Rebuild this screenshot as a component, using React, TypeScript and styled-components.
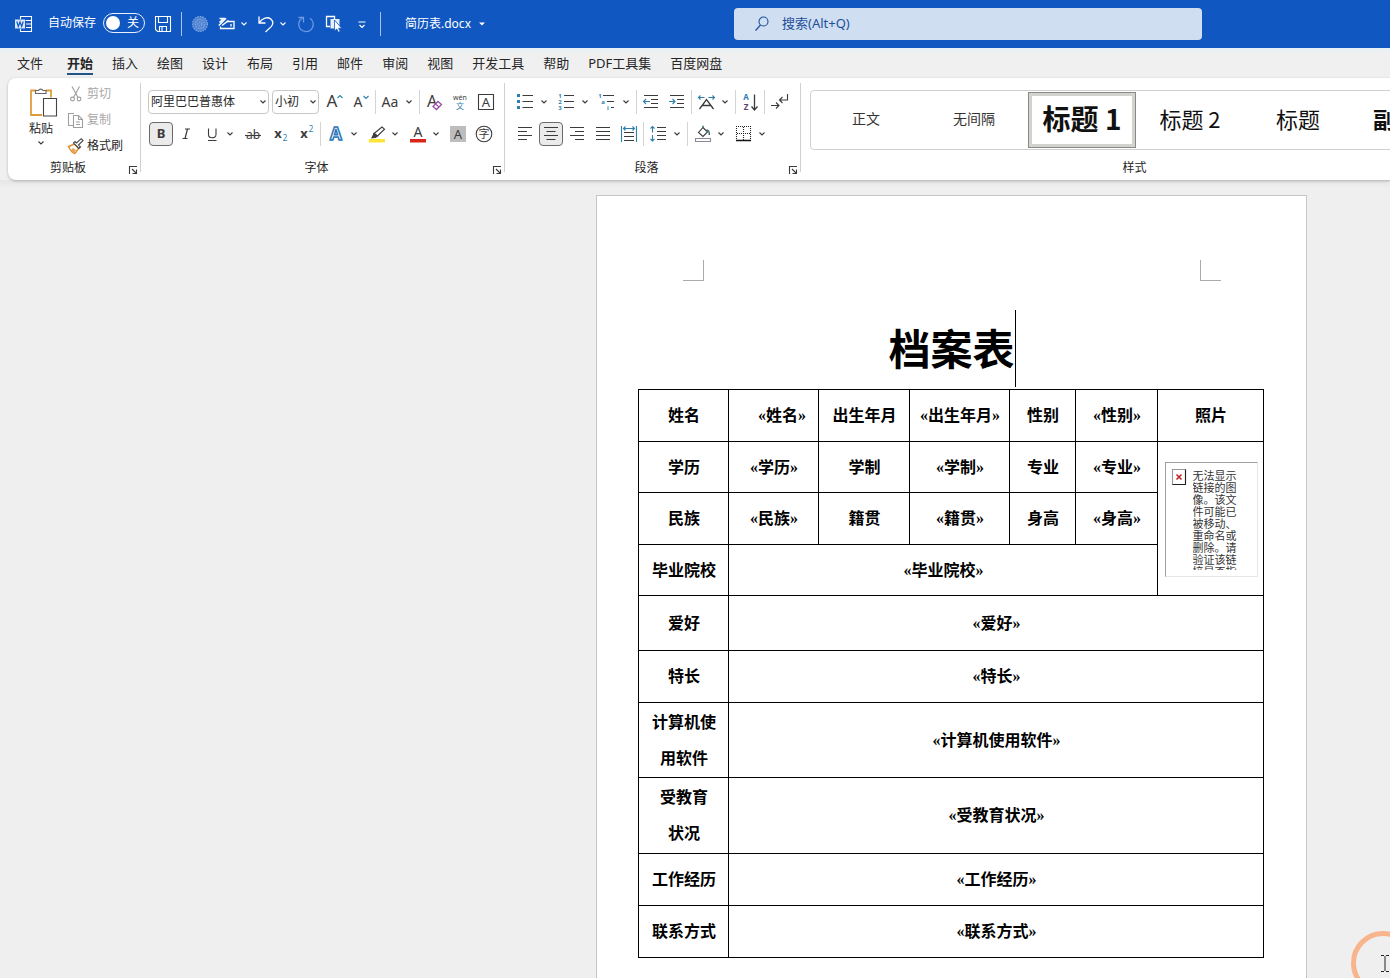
import React from "react";
import styled, { createGlobalStyle } from "styled-components";

const UI_FONT = '"Noto Sans", "Noto Sans CJK SC", sans-serif';
const INK = "#3b3b3b";
const BLUE = "#2f7fae";

const GlobalStyle = createGlobalStyle`
  * { box-sizing: border-box; }
  body {
    margin: 0;
    background: #f0f0f0;
    font-family: ${UI_FONT};
    font-size: 12px;
    line-height: 16px;
    color: #262626;
  }
  button, input, select {
    font-family: inherit;
    color: inherit;
  }
`;

const Shell = styled.div`
  display: flex;
  flex-direction: column;
  height: 100vh;
  overflow: hidden;
`;

/* ---------- title bar ---------- */

const TitleBar = styled.header`
  display: flex;
  flex: none;
  height: 48px;
  align-items: center;
  background: #1057c1;
  color: #fff;
`;

const TitleLeft = styled.div`
  display: flex;
  flex: 0 0 734px;
  align-items: center;
  padding-left: 12px;
`;

const AutoSave = styled.label`
  display: flex;
  align-items: center;
  gap: 7px;
  margin: 0 6px 2px 12px;
`;

const SwitchTrack = styled.span`
  position: relative;
  display: flex;
  width: 42px;
  height: 20px;
  align-items: center;
  justify-content: flex-end;
  padding-right: 5px;
  border: 1px solid #e8f0ff;
  border-radius: 10px;

  &::before {
    content: "";
    position: absolute;
    top: 2px;
    left: 2px;
    width: 14px;
    height: 14px;
    border-radius: 50%;
    background: #fff;
  }
`;

const SwitchInput = styled.input`
  position: absolute;
  inset: 0;
  margin: 0;
  opacity: 0;
`;

const QuickAccess = styled.div`
  display: flex;
  align-items: center;
  gap: 4px;
`;

const BarButton = styled.button<{ $w?: number }>`
  display: flex;
  flex: none;
  width: ${(p) => p.$w ?? 24}px;
  height: 24px;
  align-items: center;
  justify-content: center;
  padding: 0;
  border: 0;
  background: none;
`;

const BarSplit = styled.div`
  display: flex;
`;

const BarDivider = styled.span`
  width: 1px;
  height: 24px;
  margin: 0 2px;
  background: #a9c3ea;
`;

const FileName = styled.button`
  display: flex;
  align-items: center;
  gap: 8px;
  margin-left: 22px;
  padding: 0;
  border: 0;
  background: none;
  font-size: 12px;
  line-height: 16px;
`;

const SearchBox = styled.label`
  display: flex;
  flex: 0 1 468px;
  height: 32px;
  align-items: center;
  gap: 12px;
  padding: 0 20px 2px;
  border-radius: 4px;
  background: #cfdef1;
  color: #1f4f9a;
`;

const SearchInput = styled.input`
  flex: 1;
  min-width: 0;
  padding: 0;
  border: 0;
  outline: 0;
  background: none;
  font-size: 13px;
  line-height: 20px;

  &::placeholder {
    color: #1f4f9a;
    opacity: 1;
  }
`;

/* ---------- tabs ---------- */

const Tabs = styled.nav`
  display: flex;
  flex: none;
  height: 30px;
  gap: 19px;
  padding-left: 17px;
  background: linear-gradient(#e6f1f7, #f0f0f0 6px);
`;

const Tab = styled.a<{ $active?: boolean }>`
  height: 27px;
  padding-top: 5px;
  border-bottom: 2px solid ${(p) => (p.$active ? "#1d5687" : "transparent")};
  color: #262626;
  font-size: 13px;
  font-weight: ${(p) => (p.$active ? 700 : 400)};
  line-height: 20px;
  text-decoration: none;
  white-space: nowrap;

  &:first-child {
    margin-right: 5px;
  }
`;

/* ---------- ribbon ---------- */

const Ribbon = styled.div`
  display: flex;
  flex: none;
  height: 102px;
  margin-left: 8px;
  padding: 5px 0 2px;
  border-radius: 8px 0 0 8px;
  background: #fff;
  box-shadow: 0 1px 3px rgba(0, 0, 0, 0.25);
  z-index: 1;
`;

const Group = styled.section<{ $w: number }>`
  position: relative;
  display: flex;
  flex: none;
  width: ${(p) => p.$w}px;
  flex-direction: column;
  justify-content: space-between;

  &::after {
    content: "";
    position: absolute;
    top: 0;
    right: 0;
    bottom: 6px;
    width: 1px;
    background: #d0d0d0;
  }
`;

const GroupFooter = styled.div`
  display: flex;
  flex: none;
  align-items: center;
  justify-content: center;
  height: 20px;
  padding-right: 3px;
`;

const GroupLabel = styled.span`
  flex: 1;
  font-size: 12px;
  line-height: 20px;
  text-align: center;
`;

const Launcher = styled.button`
  display: flex;
  width: 10px;
  height: 14px;
  align-items: flex-end;
  padding: 0;
  border: 0;
  background: none;
`;

const ClipboardBody = styled.div`
  display: flex;
  height: 75px;
  gap: 11px;
  padding-left: 18px;
`;

const PasteButton = styled.button`
  display: flex;
  width: 30px;
  flex-direction: column;
  align-items: center;
  padding: 3px 0 0;
  border: 0;
  background: none;
  font-size: 12px;
  line-height: 22px;
  white-space: nowrap;
`;

const ClipboardList = styled.div`
  display: flex;
  flex-direction: column;
`;

const ClipboardItem = styled.button<{ $off?: boolean }>`
  display: flex;
  flex: none;
  height: 26px;
  align-items: center;
  gap: 2px;
  padding: 0 0 4px;
  border: 0;
  background: none;
  color: ${(p) => (p.$off ? "#a8a8a8" : "#262626")};
  font-size: 12px;
  line-height: 18px;
  white-space: nowrap;
`;

const ToolRows = styled.div`
  display: flex;
  flex-direction: column;
  gap: 8px;
  padding: 7px 0 0 7px;
`;

const ToolRow = styled.div`
  display: flex;
  height: 24px;
  align-items: center;
`;

const Tool = styled.button<{ $w?: number; $on?: boolean }>`
  display: flex;
  flex: none;
  width: ${(p) => p.$w ?? 26}px;
  height: 24px;
  align-items: center;
  justify-content: center;
  padding: 0;
  border: 0;
  background: none;

  & > span {
    display: flex;
    width: 24px;
    height: 24px;
    align-items: center;
    justify-content: center;
    border: 1px solid ${(p) => (p.$on ? "#6a6a6a" : "transparent")};
    border-radius: 4px;
    background: ${(p) => (p.$on ? "#ebebeb" : "none")};
  }
`;

const SplitTool = styled.button`
  display: flex;
  flex: none;
  width: 41px;
  height: 24px;
  align-items: center;
  gap: 5px;
  padding: 0 5px;
  border: 0;
  background: none;
`;

const ToolDivider = styled.span`
  flex: none;
  width: 1px;
  height: 24px;
  margin: 0 1px;
  background: #d4d4d4;
`;

const Combo = styled.span<{ $w: number }>`
  position: relative;
  flex: none;
  width: ${(p) => p.$w}px;
  height: 24px;
  margin-right: 3px;

  & > svg {
    position: absolute;
    top: 9px;
    right: 2px;
    pointer-events: none;
  }
`;

const ComboSelect = styled.select`
  width: 100%;
  height: 24px;
  padding: 0 0 2px 2px;
  border: 1px solid #c8c8c8;
  border-radius: 4px;
  background: #fff;
  appearance: none;
  font-size: 12px;
`;

const StylesBody = styled.div`
  padding: 7px 8px 0 9px;
`;

const Gallery = styled.div`
  display: flex;
  height: 60px;
  padding: 1px;
  border: 1px solid #d0d0d0;
  border-radius: 4px;
`;

const StyleTile = styled.button<{ $size: number; $bold?: boolean; $on?: boolean }>`
  flex: 0 0 108px;
  height: 56px;
  padding: 0 0 4px;
  border: ${(p) => (p.$on ? "1px solid #8a8a86" : "0")};
  box-shadow: ${(p) => (p.$on ? "inset 0 0 0 3px #d2d2ce" : "none")};
  background: none;
  color: ${(p) => (p.$size > 14 ? "#111" : "#333")};
  font-family: "Noto Sans CJK SC", sans-serif;
  font-size: ${(p) => p.$size}px;
  font-weight: ${(p) => (p.$bold ? 700 : 400)};
  line-height: 32px;
  white-space: nowrap;
`;

/* ---------- document ---------- */

const Workspace = styled.main`
  position: relative;
  flex: 1;
  min-height: 0;
  overflow: hidden;
  padding: 15px 83px 0 0;
  background: linear-gradient(#e6e6e6, #efefef 8px);
`;

const Page = styled.article`
  width: 711px;
  min-height: 1004px;
  margin-left: auto;
  padding: 64px 42px 0 41px;
  border: 1px solid #c6c6c6;
  background: #fff;
  color: #000;
`;

const CropMarks = styled.div`
  display: flex;
  justify-content: space-between;
  padding: 0 43px 0 45px;
`;

const CropMark = styled.span<{ $side: "left" | "right" }>`
  width: 21px;
  height: 21px;
  border-bottom: 1px solid #ababab;
  border-${(p) => (p.$side === "left" ? "right" : "left")}: 1px solid #ababab;
`;

const TitleLine = styled.div`
  display: flex;
  justify-content: center;
  height: 77px;
  margin: 29px 0 2px;
  padding-left: 2px;
`;

const DocTitle = styled.h1`
  margin: 0;
  border-right: 1px solid #000;
  font-family: "Noto Sans CJK SC", sans-serif;
  font-size: 42px;
  font-weight: 700;
  line-height: 74px;
`;

const Record = styled.table`
  width: 626px;
  border-collapse: collapse;
  table-layout: fixed;
  font-family: "Liberation Serif", "Noto Sans CJK SC", serif;
  font-size: 16px;
  font-weight: 700;
  line-height: 36px;
`;

const Row = styled.tr<{ $h: number }>`
  height: ${(p) => p.$h}px;
`;

const Cell = styled.td<{ $indent?: boolean }>`
  padding: 1px 0 0 1px;
  border: 1px solid #000;
  text-align: center;
  text-indent: ${(p) => (p.$indent ? 16 : 0)}px;
  vertical-align: middle;
`;

const BrokenPicture = styled.div`
  display: flex;
  width: 93px;
  height: 115px;
  margin: 0 auto;
  gap: 7px;
  padding: 6px;
  border: 1px solid;
  border-color: #a0a0a0 #e6e6e6 #e6e6e6 #a0a0a0;
`;

const BrokenText = styled.p`
  width: 44px;
  height: 101px;
  margin: 0;
  overflow: hidden;
  color: #333;
  font-family: "Noto Sans CJK SC", sans-serif;
  font-size: 11px;
  font-weight: 400;
  line-height: 12px;
  text-align: left;
`;

const ClickRing = styled.svg`
  position: absolute;
  right: -26px;
  bottom: -18px;
`;

/* ---------- icons ---------- */

type IconProps = { w?: number; h?: number; children: React.ReactNode; color?: string };

const IconSvg = styled.svg`
  flex: none;
  overflow: visible;
`;

const Icon = ({ w = 18, h = 18, color = INK, children }: IconProps) => (
  <IconSvg width={w} height={h} viewBox={`0 0 ${w} ${h}`} fill="none" stroke={color} strokeWidth="1.1" aria-hidden="true">
    {children}
  </IconSvg>
);

const Glyph = ({ x, y, size, fill = INK, weight = 400, children }: {
  x: number; y: number; size: number; fill?: string; weight?: number; children: string;
}) => (
  <text x={x} y={y} fontSize={size} fill={fill} stroke="none" fontWeight={weight}
    textAnchor="middle" fontFamily={UI_FONT}>
    {children}
  </text>
);

const Chevron = ({ color = INK }: { color?: string }) => (
  <Icon w={8} h={6} color={color}><path d="M1.5 1.5 4 4l2.5-2.5" strokeWidth="1.1" /></Icon>
);

const LauncherIcon = () => (
  <Icon w={10} h={10}><path d="M1.5 9V1.5H9M4 4l4.500 4.500M8.500 4.500v4h-4" /></Icon>
);

const WordIcon = () => (
  <Icon color="#fff">
    <path d="M5.500 4V1.500h11v15h-11V14M10.500 5.500h6M11 9h5.500M11 12.500h5.500" />
    <path d="M0 4.500h10v9H0z" fill="#dbe8fb" stroke="none" />
    <path d="m1.800 6.500 1.500 5L5 7l1.700 4.500 1.500-5" stroke="#1057c1" strokeWidth="1.2" />
  </Icon>
);

const SaveIcon = () => (
  <Icon color="#fff"><path d="M1.500 1.500h15v15h-13l-2-2zM4.500 1.500v6h9v-6M5.500 16.500v-5h7v5M8 12v4" /></Icon>
);

const DotIcon = () => (
  <Icon color="#7fa6e2">
    <circle cx="9" cy="9" r="7.500" fill="#5485d3" strokeDasharray="1.5 1" />
    <circle cx="9" cy="9" r="4.500" strokeDasharray="1.5 1" />
    <circle cx="9" cy="9" r="2" strokeDasharray="1.5 1" />
  </Icon>
);

const PenDeviceIcon = () => (
  <Icon color="#fff">
    <path d="M8.500 6.500h7.500v7H2.500v-2M13 9v2.500" strokeWidth="1.3" />
    <path d="M.8 10.500 8 3.200M1.500 3.500h4L1.500 7.500M4 10.500l6.500-5" strokeWidth="1.5" />
  </Icon>
);

const UndoIcon = () => (
  <Icon color="#fff"><path d="M2 1.500v6.500h6.500M2.300 7.500C5.500 3 10.500 1.500 13.800 4c3 2.400 2.300 5.800.2 7.900L8.500 17" strokeWidth="1.3" /></Icon>
);

const RedoIcon = () => (
  <Icon color="#6d99de"><path d="M5.500 3A7.300 7.300 0 1 0 13 3.300M1.500 2.500h5V7.500" strokeWidth="1.3" /></Icon>
);

const TouchIcon = () => (
  <Icon color="#fff">
    <path d="M5 11.500H1.500v-10h8V4" strokeWidth="1.3" />
    <path d="M5.500 4h9v9.500h-9z" fill="#e8f0fc" stroke="none" />
    <path d="M9.500 5v11l2.300-2 1.600 3.300 1.800-.8-1.600-3.200h3.100z" fill="#fff" stroke="#1057c1" strokeWidth=".8" />
  </Icon>
);

const MoreIcon = () => (
  <Icon w={10} h={10} color="#fff"><path d="M1.500 3h7M2.500 6 5 8.500 7.500 6" strokeWidth="1.2" /></Icon>
);

const SearchIcon = () => (
  <Icon w={16} h={16} color="#1f4f9a"><circle cx="9.500" cy="6.500" r="4.500" /><path d="M6.500 10 1.500 15.500" strokeWidth="1.2" /></Icon>
);

const PasteIcon = () => (
  <Icon w={30} h={32}>
    <path d="M10 4.500H5v24.500h11M20 4.500h5v7" stroke="#e09c3b" strokeWidth="1.8" />
    <path d="M9.500 7.500v-3h3a2.500 2.500 0 0 1 4.500 0h3v3z" fill="#fff" stroke="#666" />
    <path d="M17.500 12.500h13v17.500h-13z" fill="#fff" stroke="#444" />
  </Icon>
);

const CutIcon = () => (
  <Icon color="#9d9d9d">
    <path d="m5 1.500 6 11M12.500 1.500l-6 11" />
    <circle cx="5.500" cy="14" r="1.900" /><circle cx="12" cy="14" r="1.900" />
  </Icon>
);

const CopyIcon = () => (
  <Icon color="#a0a0a0">
    <path d="M6.500 14.500h-5v-12h5.500M6.500 4.500h5l4 4v8h-9zM11.500 4.500v4h4M9 11h4M9 13.500h4" />
  </Icon>
);

const BrushIcon = () => (
  <Icon>
    <path d="m1.500 9.500 6-2.500 4 4.500-3.500 5C5 15.500 3 13 1.500 9.500z" fill="#fff" stroke="#e08e2b" strokeWidth="1.4" />
    <path d="m4 13 3 3 2-3-3-2z" fill="#e9a55a" stroke="none" />
    <path d="m6.500 6 5.500 5.500 1.500-1.500-2-2 4.500-4.500-1.800-1.800L9.500 6 8 4.500z" fill="#fff" stroke="#444" />
  </Icon>
);

const GrowIcon = () => (
  <Icon><Glyph x={6} y={14} size={17}>A</Glyph><path d="m11.500 5 2.500-2.500L16.500 5" stroke={BLUE} /></Icon>
);
const ShrinkIcon = () => (
  <Icon><Glyph x={6} y={14} size={14}>A</Glyph><path d="m11.500 3 2.500 2.500L16.500 3" stroke={BLUE} /></Icon>
);
const CaseIcon = () => (
  <Icon><Glyph x={8} y={14} size={14}>Aa</Glyph></Icon>
);
const EraserIcon = () => (
  <Icon>
    <Glyph x={7} y={14} size={16}>A</Glyph>
    <path d="m8 13.500 5-5 3.500 3-5 5z" fill="#fff" stroke="#9a4fa8" strokeWidth="1.3" />
    <path d="m10.500 11 3.500 3" stroke="#9a4fa8" />
  </Icon>
);
const PinyinIcon = () => (
  <Icon><Glyph x={9} y={7} size={7}>wén</Glyph><Glyph x={9} y={16} size={8} fill={BLUE}>文</Glyph></Icon>
);
const BoxedAIcon = () => (
  <Icon><path d="M1.500 1.500h15v15h-15z" /><Glyph x={9} y={14} size={13}>A</Glyph></Icon>
);
const BoldIcon = () => <Icon><Glyph x={9} y={13} size={13} weight={700}>B</Glyph></Icon>;
const ItalicIcon = () => (
  <Icon><path d="M8 4h5M5.500 13.500h5M10.500 4 8 13.500" strokeWidth="1.2" /></Icon>
);
const UnderlineIcon = () => (
  <Icon><path d="M5.500 3.500v6c0 4.400 7.500 4.400 7.500 0v-6M5 15.500h8.500" /></Icon>
);
const StrikeIcon = () => (
  <Icon><Glyph x={9} y={14} size={12}>ab</Glyph><path d="M1 10.500h16" /></Icon>
);
const SubIcon = () => (
  <Icon><Glyph x={7} y={13} size={13} weight={700}>x</Glyph><Glyph x={14} y={16} size={8} fill={BLUE}>2</Glyph></Icon>
);
const SuperIcon = () => (
  <Icon><Glyph x={7} y={13} size={13} weight={700}>x</Glyph><Glyph x={14} y={7} size={8} fill={BLUE}>2</Glyph></Icon>
);
const EffectsIcon = () => (
  <Icon>
    <text x="9" y="15" fontSize="17" fontWeight="700" textAnchor="middle" fontFamily={UI_FONT}
      fill="#fff" stroke="#2b75b5" strokeWidth="1.5">A</text>
  </Icon>
);
const HighlightIcon = () => (
  <Icon>
    <path d="M1 14h16v3.500H1z" fill="#fbe636" stroke="none" />
    <path d="m6 8.500 8-6.500 2.500 2.200L9.500 11z" fill="#fff" />
    <path d="m6 8.500 3.500 2.500-2 1.500-3.500.3z" fill={INK} />
  </Icon>
);
const FontColorIcon = () => (
  <Icon><Glyph x={9} y={12} size={14}>A</Glyph><path d="M1 14h16v3.500H1z" fill="#d9261c" stroke="none" /></Icon>
);
const ShadeAIcon = () => (
  <Icon><path d="M1 1h16v16H1z" fill="#bdbdbd" stroke="none" /><Glyph x={9} y={14} size={13}>A</Glyph></Icon>
);
const CircleCharIcon = () => (
  <Icon><circle cx="9" cy="9" r="7.800" /><Glyph x={9} y={13} size={11}>字</Glyph></Icon>
);

const BulletsIcon = () => (
  <Icon>
    <path d="M5.500 2.500H16M5.500 8.500H16M5.500 14.500H16" />
    <path d="M0 1h3v3H0zM0 7h3v3H0zM0 13h3v3H0z" fill={BLUE} stroke="none" />
  </Icon>
);
const NumbersIcon = () => (
  <Icon>
    <path d="M6 2.500h10M6 8.500h10M6 14.500h10" />
    <Glyph x={2} y={5} size={6} weight={700} fill={BLUE}>1</Glyph>
    <Glyph x={2} y={11} size={6} weight={700} fill={BLUE}>2</Glyph>
    <Glyph x={2} y={17} size={6} weight={700} fill={BLUE}>3</Glyph>
  </Icon>
);
const MultiLevelIcon = () => (
  <Icon>
    <path d="M4 2.500h11M8 8.500h7M12 14.500h3" />
    <Glyph x={1} y={5} size={6} weight={700} fill={BLUE}>1</Glyph>
    <Glyph x={4} y={11} size={6} weight={700} fill={BLUE}>a</Glyph>
    <Glyph x={9} y={17} size={6} weight={700} fill={BLUE}>i</Glyph>
  </Icon>
);
const OutdentIcon = () => (
  <Icon><path d="M2 2.500h14M9 6.500h7M9 10.500h7M2 14.500h14" /><path d="M8 8.500H1.500M4 6 1.500 8.500 4 11" stroke={BLUE} /></Icon>
);
const IndentIcon = () => (
  <Icon><path d="M2 2.500h14M9 6.500h7M9 10.500h7M2 14.500h14" /><path d="M1 8.500h6M4.500 6 7 8.500 4.500 11" stroke={BLUE} /></Icon>
);
const AsianIcon = () => (
  <Icon>
    <path d="m1.500 16 7-9.500 7 9.500M4.500 12.500h8" strokeWidth="1.3" />
    <path d="M.5 4.500h6M2.500 2.500l-2 2 2 2M10.500 4.500h6M14.500 2.500l2 2-2 2" stroke={BLUE} />
  </Icon>
);
const SortIcon = () => (
  <Icon>
    <Glyph x={5} y={7} size={8} weight={700} fill={BLUE}>A</Glyph>
    <Glyph x={5} y={17} size={8} weight={700} fill="#5d3f70">Z</Glyph>
    <path d="M13.500 1.500V17M10.500 13.500l3 3.500 3-3.500" strokeWidth="1.3" />
  </Icon>
);
const MarksIcon = () => (
  <Icon>
    <path d="M17.500 1v6H9.500M12.500 4l-3 3 3 3M1 12.500h8M6 9.500l3 3-3 3" />
  </Icon>
);
const LeftIcon = () => <Icon><path d="M2 2.500h14M2 6.500h9M2 10.500h14M2 14.500h9" /></Icon>;
const CenterIcon = () => <Icon><path d="M2 2.500h14M4.500 6.500h9M2 10.500h14M4.500 14.500h9" /></Icon>;
const RightIcon = () => <Icon><path d="M2 2.500h14M7 6.500h9M2 10.500h14M7 14.500h9" /></Icon>;
const JustifyIcon = () => <Icon><path d="M2 2.500h14M2 6.500h14M2 10.500h14M2 14.500h14" /></Icon>;
const DistributeIcon = () => (
  <Icon>
    <path d="M4 7.500h10M4 11.500h10M4 15.500h10" />
    <path d="M1.500 1v16M16.500 1v16M3.500 3.500h11M5.500 1.500l-2 2 2 2M12.500 1.500l2 2-2 2" stroke={BLUE} />
  </Icon>
);
const SpacingIcon = () => (
  <Icon>
    <path d="M7 2.500h9M7 6.500h9M7 10.500h9M7 14.500h9" />
    <path d="M2.500 1.500v6M.5 3.500l2-2 2 2M2.500 10v6M.5 14l2 2 2-2" stroke={BLUE} />
  </Icon>
);
const ShadingIcon = () => (
  <Icon>
    <path d="M1.500 13.500h15v3h-15z" stroke="#8d8797" />
    <path d="m9 2.500 4.500 4.500L9 11.500 4.500 7.500z" />
    <path d="M9 2.500V.8M12.500 5c2.500.2 3 1.500 2.800 5" stroke="#3f6f73" strokeWidth="1.5" />
  </Icon>
);
const BordersIcon = () => (
  <Icon>
    <path d="M1 1.500h15M1.500 1v15M15.500 1v15M8.500 2v13M2 8.500h13" strokeDasharray="1 1" stroke="#222" />
    <path d="M1 15.500h15" strokeWidth="1.5" stroke="#111" />
  </Icon>
);
const BrokenIcon = () => (
  <Icon w={14} h={16}>
    <path d="M.5.5h13v15H.5z" fill="#fff" stroke="#999" />
    <path d="M13.500.5v15H.5" stroke="#222" />
    <path d="m4.500 5.500 5 5M9.500 5.500l-5 5" stroke="#c02020" strokeWidth="1.5" />
  </Icon>
);

/* ---------- data ---------- */

const TAB_NAMES = ["文件", "开始", "插入", "绘图", "设计", "布局", "引用", "邮件", "审阅", "视图", "开发工具", "帮助", "PDF工具集", "百度网盘"];

const STYLE_TILES = [
  { name: "正文", size: 14 },
  { name: "无间隔", size: 14 },
  { name: "标题 1", size: 28, bold: true, on: true },
  { name: "标题 2", size: 22 },
  { name: "标题", size: 22 },
  { name: "副标题", size: 22, bold: true },
];

const COLUMN_WIDTHS = [90, 90, 91, 100, 66, 82, 106];

const WIDE_ROWS: { label: string[]; value: string; h: number }[] = [
  { label: ["爱好"], value: "«爱好»", h: 55 },
  { label: ["特长"], value: "«特长»", h: 52 },
  { label: ["计算机使", "用软件"], value: "«计算机使用软件»", h: 75 },
  { label: ["受教育", "状况"], value: "«受教育状况»", h: 76 },
  { label: ["工作经历"], value: "«工作经历»", h: 52 },
  { label: ["联系方式"], value: "«联系方式»", h: 52 },
];

const FooterRow = ({ name, launcher = true }: { name: string; launcher?: boolean }) => (
  <GroupFooter>
    <GroupLabel>{name}</GroupLabel>
    {launcher && <Launcher aria-label={`${name}设置`}><LauncherIcon /></Launcher>}
  </GroupFooter>
);

const ToolButton = ({ label, w, on, children }: { label: string; w?: number; on?: boolean; children: React.ReactNode }) => (
  <Tool aria-label={label} aria-pressed={on} $w={w} $on={on}><span>{children}</span></Tool>
);

const Split = ({ label, children }: { label: string; children: React.ReactNode }) => (
  <SplitTool aria-label={label}>{children}<Chevron /></SplitTool>
);

const Header = () => (
  <TitleBar>
    <TitleLeft>
      <BarButton aria-label="Word"><WordIcon /></BarButton>
      <AutoSave>
        自动保存
        <SwitchTrack>关<SwitchInput type="checkbox" role="switch" /></SwitchTrack>
      </AutoSave>
      <QuickAccess>
        <BarButton aria-label="保存"><SaveIcon /></BarButton>
        <BarDivider />
        <BarButton aria-label="状态"><DotIcon /></BarButton>
        <BarSplit>
          <BarButton $w={21} aria-label="手写"><PenDeviceIcon /></BarButton>
          <BarButton $w={14} aria-label="手写选项"><Chevron color="#fff" /></BarButton>
        </BarSplit>
        <BarSplit>
          <BarButton $w={21} aria-label="撤消"><UndoIcon /></BarButton>
          <BarButton $w={14} aria-label="撤消选项"><Chevron color="#fff" /></BarButton>
        </BarSplit>
        <BarButton aria-label="重做"><RedoIcon /></BarButton>
        <BarButton aria-label="触摸模式"><TouchIcon /></BarButton>
        <BarButton aria-label="更多"><MoreIcon /></BarButton>
        <BarDivider />
      </QuickAccess>
      <FileName>
        简历表.docx
        <Icon w={6} h={4}><path d="M0 .5h6L3 3.500z" fill="#fff" stroke="none" /></Icon>
      </FileName>
    </TitleLeft>
    <SearchBox>
      <SearchIcon />
      <SearchInput type="search" placeholder="搜索(Alt+Q)" />
    </SearchBox>
  </TitleBar>
);

const ClipboardGroup = () => (
  <Group $w={133}>
    <ClipboardBody>
      <PasteButton><PasteIcon />粘贴<Chevron /></PasteButton>
      <ClipboardList>
        <ClipboardItem $off><CutIcon />剪切</ClipboardItem>
        <ClipboardItem $off><CopyIcon />复制</ClipboardItem>
        <ClipboardItem><BrushIcon />格式刷</ClipboardItem>
      </ClipboardList>
    </ClipboardBody>
    <FooterRow name="剪贴板" />
  </Group>
);

const FontGroup = () => (
  <Group $w={364}>
    <ToolRows>
      <ToolRow>
        <Combo $w={121}>
          <ComboSelect aria-label="字体"><option>阿里巴巴普惠体</option></ComboSelect>
          <Chevron />
        </Combo>
        <Combo $w={47}>
          <ComboSelect aria-label="字号"><option>小初</option></ComboSelect>
          <Chevron />
        </Combo>
        <ToolButton label="增大字号"><GrowIcon /></ToolButton>
        <ToolButton label="减小字号"><ShrinkIcon /></ToolButton>
        <ToolDivider />
        <Split label="更改大小写"><CaseIcon /></Split>
        <ToolDivider />
        <ToolButton label="清除格式"><EraserIcon /></ToolButton>
        <ToolButton label="拼音指南"><PinyinIcon /></ToolButton>
        <ToolButton label="字符边框"><BoxedAIcon /></ToolButton>
      </ToolRow>
      <ToolRow>
        <ToolButton label="加粗" on><BoldIcon /></ToolButton>
        <ToolButton label="倾斜" w={24}><ItalicIcon /></ToolButton>
        <Split label="下划线"><UnderlineIcon /></Split>
        <ToolButton label="删除线" w={28}><StrikeIcon /></ToolButton>
        <ToolButton label="下标"><SubIcon /></ToolButton>
        <ToolButton label="上标"><SuperIcon /></ToolButton>
        <ToolDivider />
        <Split label="文本效果"><EffectsIcon /></Split>
        <Split label="突出显示"><HighlightIcon /></Split>
        <Split label="字体颜色"><FontColorIcon /></Split>
        <ToolButton label="字符底纹"><ShadeAIcon /></ToolButton>
        <ToolButton label="带圈字符"><CircleCharIcon /></ToolButton>
      </ToolRow>
    </ToolRows>
    <FooterRow name="字体" />
  </Group>
);

const ParagraphGroup = () => (
  <Group $w={296}>
    <ToolRows>
      <ToolRow>
        <Split label="项目符号"><BulletsIcon /></Split>
        <Split label="编号"><NumbersIcon /></Split>
        <Split label="多级列表"><MultiLevelIcon /></Split>
        <ToolDivider />
        <ToolButton label="减少缩进"><OutdentIcon /></ToolButton>
        <ToolButton label="增加缩进"><IndentIcon /></ToolButton>
        <ToolDivider />
        <Split label="中文版式"><AsianIcon /></Split>
        <ToolDivider />
        <ToolButton label="排序"><SortIcon /></ToolButton>
        <ToolDivider />
        <ToolButton label="显示标记"><MarksIcon /></ToolButton>
      </ToolRow>
      <ToolRow>
        <ToolButton label="左对齐"><LeftIcon /></ToolButton>
        <ToolButton label="居中" on><CenterIcon /></ToolButton>
        <ToolButton label="右对齐"><RightIcon /></ToolButton>
        <ToolButton label="两端对齐"><JustifyIcon /></ToolButton>
        <ToolButton label="分散对齐"><DistributeIcon /></ToolButton>
        <ToolDivider />
        <Split label="行距"><SpacingIcon /></Split>
        <ToolDivider />
        <Split label="底纹"><ShadingIcon /></Split>
        <Split label="边框"><BordersIcon /></Split>
      </ToolRow>
    </ToolRows>
    <FooterRow name="段落" />
  </Group>
);

const StylesGroup = () => (
  <Group $w={670}>
    <StylesBody>
      <Gallery>
        {STYLE_TILES.map((s) => (
          <StyleTile key={s.name} $size={s.size} $bold={s.bold} $on={s.on}>{s.name}</StyleTile>
        ))}
      </Gallery>
    </StylesBody>
    <FooterRow name="样式" launcher={false} />
  </Group>
);

const RecordTable = () => (
  <Record>
    <colgroup>
      {COLUMN_WIDTHS.map((w, i) => <col key={i} width={w} />)}
    </colgroup>
    <tbody>
      <Row $h={52}>
        <Cell>姓名</Cell><Cell $indent>«姓名»</Cell><Cell>出生年月</Cell><Cell>«出生年月»</Cell>
        <Cell>性别</Cell><Cell>«性别»</Cell><Cell>照片</Cell>
      </Row>
      <Row $h={51}>
        <Cell>学历</Cell><Cell>«学历»</Cell><Cell>学制</Cell><Cell>«学制»</Cell>
        <Cell>专业</Cell><Cell>«专业»</Cell>
        <Cell rowSpan={3}>
          <BrokenPicture>
            <BrokenIcon />
            <BrokenText>无法显示链接的图像。该文件可能已被移动、重命名或删除。请验证该链接是否指</BrokenText>
          </BrokenPicture>
        </Cell>
      </Row>
      <Row $h={52}>
        <Cell>民族</Cell><Cell>«民族»</Cell><Cell>籍贯</Cell><Cell>«籍贯»</Cell>
        <Cell>身高</Cell><Cell>«身高»</Cell>
      </Row>
      <Row $h={51}>
        <Cell>毕业院校</Cell><Cell colSpan={5}>«毕业院校»</Cell>
      </Row>
      {WIDE_ROWS.map((r) => (
        <Row key={r.value} $h={r.h}>
          <Cell>{r.label.map((line, i) => <React.Fragment key={line}>{i > 0 && <br />}{line}</React.Fragment>)}</Cell>
          <Cell colSpan={6}>{r.value}</Cell>
        </Row>
      ))}
    </tbody>
  </Record>
);

export default function App() {
  return (
    <Shell>
      <GlobalStyle />
      <Header />
      <Tabs>
        {TAB_NAMES.map((t) => <Tab key={t} href="#" $active={t === "开始"}>{t}</Tab>)}
      </Tabs>
      <Ribbon>
        <ClipboardGroup />
        <FontGroup />
        <ParagraphGroup />
        <StylesGroup />
      </Ribbon>
      <Workspace>
        <Page>
          <CropMarks><CropMark $side="left" /><CropMark $side="right" /></CropMarks>
          <TitleLine><DocTitle>档案表</DocTitle></TitleLine>
          <RecordTable />
        </Page>
        <ClickRing width="66" height="66" viewBox="0 0 66 66" fill="none" aria-hidden="true">
          <circle cx="33" cy="33" r="29.500" stroke="#f8b48c" strokeWidth="5" />
          <path d="M31 25.500h3M36 25.500h3M35 26v15M31 41.500h3M36 41.500h3" stroke="#222" />
        </ClickRing>
      </Workspace>
    </Shell>
  );
}
